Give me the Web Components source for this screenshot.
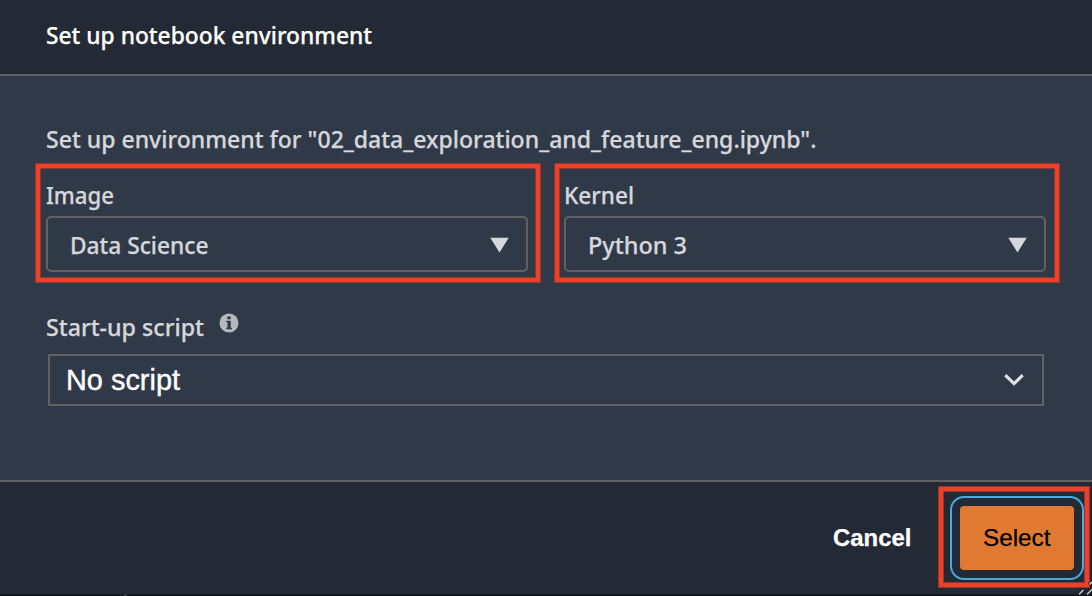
<!DOCTYPE html>
<html lang="en"><head><meta charset="utf-8"><title>Set up notebook environment</title>
<style>
html,body{margin:0;height:100%;overflow:hidden;background:#14171d}
body{font-family:"Noto Sans","Open Sans",sans-serif;font-size:24px;font-weight:500;color:#d5d7dc;-webkit-text-stroke:.25px}
</style></head><body>
<notebook-dialog></notebook-dialog>
<script>
const define=(name,html,setup)=>customElements.define(name,class extends HTMLElement{
  connectedCallback(){
    if(this.shadowRoot)return;
    const t=document.createElement('template');t.innerHTML=html;
    this.attachShadow({mode:'open'}).append(t.content.cloneNode(true));
    if(setup)setup(this,this.shadowRoot);
  }
});
/* A single line of text condensed or widened to the width attribute. */
define('fit-text',`<style>:host{display:block;flex:none;line-height:32px;height:32px;white-space:nowrap}
span{display:inline-block;transform-origin:0 0}</style><span><slot></slot></span>`,(el,root)=>{
  const s=root.querySelector('span'),w=+el.getAttribute('width');
  el.style.width=w+'px';
  s.style.transform='scaleX('+w/s.getBoundingClientRect().width+')';
});
/* Red frame laid over whatever it surrounds. */
define('mark-frame',`<style>:host{position:absolute;box-sizing:border-box;border:1px solid #8f3730;pointer-events:none}
div{position:absolute;inset:0;border:4px solid #ee4026}
i{position:absolute;inset:4px;border:1px solid #8f3730}</style><div></div><i></i>`);
define('picker-field',`<style>:host{display:block;position:relative;width:482px}
.box{box-sizing:border-box;margin-top:5px;height:56px;border:2px solid #626262;border-radius:5px;display:flex;align-items:center;justify-content:space-between;padding:2px 17px 0 22px}
svg{display:block}
mark-frame{left:var(--frame-left,-11px);top:-16px;width:506px;height:120px}</style>
<slot name="label"></slot><div class="box"><slot></slot><svg width="19" height="16" viewBox="0 0 19 16"><path d="M.3 .8H18.7L9.5 15.5Z" fill="#d5d7dc"/></svg></div><mark-frame></mark-frame>`);
define('script-select',`<style>:host{box-sizing:border-box;display:flex;align-items:center;justify-content:space-between;height:52px;border:2px solid #626262;padding:0 17px 0 16px;font-family:"Liberation Sans",Arial,sans-serif;font-weight:400;font-size:29px;color:#fff;-webkit-text-stroke:.4px}</style>
<slot></slot><svg width="22" height="16" viewBox="0 0 22 16"><path d="M2.3 3.1 11 11.6 19.7 3.1" fill="none" stroke="#e1e1e1" stroke-width="3.2"/></svg>`);
define('info-icon',`<style>:host{display:block;width:20px;height:20px}svg{display:block}</style>
<svg width="20" height="20" viewBox="0 0 20 20"><circle cx="10" cy="10" r="9.5" fill="#b5b9bd"/><path d="M8.3 3.6h3.4v2.6H8.3ZM7.3 7.7h4.4v7H13v1.5H7.3v-1.5h1.2V9.2H7.3Z" fill="#303948"/></svg>`);
define('select-button',`<style>:host{display:block;position:relative}
button{all:unset;box-sizing:border-box;display:flex;align-items:center;justify-content:center;width:114px;height:64px;border-radius:4px;background:#e07a33;color:#000;outline:2px solid #49a9dc;outline-offset:8px}
mark-frame{left:-22px;top:-20px;width:152px;height:102px}</style><button><slot></slot></button><mark-frame></mark-frame>`);
define('resize-grip',`<style>:host{position:absolute;right:0;bottom:0;width:16px;height:16px}svg{display:block}</style>
<svg width="16" height="16" viewBox="0 0 16 16"><g fill="none"><path d="M3.5 14 8 9.5M11 14l5-5M13.5 5 16 2.5" stroke="#10141a" stroke-width="4.2"/><path d="M3 14.3 7.5 9.8M11 14.3l5-5M13.5 4.5 16 2" stroke="#b9babb" stroke-width="1.8"/></g></svg>`);
define('notebook-dialog',`<style>
:host{position:relative;display:flex;flex-direction:column;width:1092px;height:596px;overflow:hidden}
header{box-sizing:border-box;height:76px;background:#232a35;border-bottom:2px solid #626262;padding:19px 46px;color:#fff}
main{box-sizing:border-box;height:406px;background:#303948;border-bottom:2px solid #626262;padding:47px 46px 0}
.row{display:flex;gap:36px;margin-top:24px}
.label{display:flex;align-items:flex-start;gap:15px;margin:39px 0 11px}
info-icon{margin-top:2px}
script-select{margin:0 2px}
footer{box-sizing:border-box;height:112px;background:#232a35;display:flex;align-items:flex-start;justify-content:flex-end;gap:49px;padding:24px 18px 0;font-family:"Liberation Sans",Arial,sans-serif;font-size:24px;font-weight:400}
.cancel{margin-top:16px;font-weight:700;color:#fff}
.edge{height:2px;background:#14171d;padding-left:124px}.edge i{display:block;width:3px;height:2px;background:#393d40}
</style>
<header><fit-text width="326">Set up notebook environment</fit-text></header>
<main><fit-text width="770.5">Set up environment for "02_data_exploration_and_feature_eng.ipynb".</fit-text>
<div class="row"><picker-field><fit-text slot="label" width="68">Image</fit-text><fit-text width="138.5">Data Science</fit-text></picker-field>
<picker-field style="--frame-left:-10px"><fit-text slot="label" width="70">Kernel</fit-text><fit-text width="99">Python 3</fit-text></picker-field></div>
<div class="label"><fit-text width="158">Start-up script</fit-text><info-icon></info-icon></div>
<script-select><fit-text width="114">No script</fit-text></script-select></main>
<footer><fit-text class="cancel" width="78.5">Cancel</fit-text><select-button><fit-text width="67.5">Select</fit-text></select-button></footer>
<div class="edge"><i></i></div><resize-grip></resize-grip>`);
</script></body></html>
